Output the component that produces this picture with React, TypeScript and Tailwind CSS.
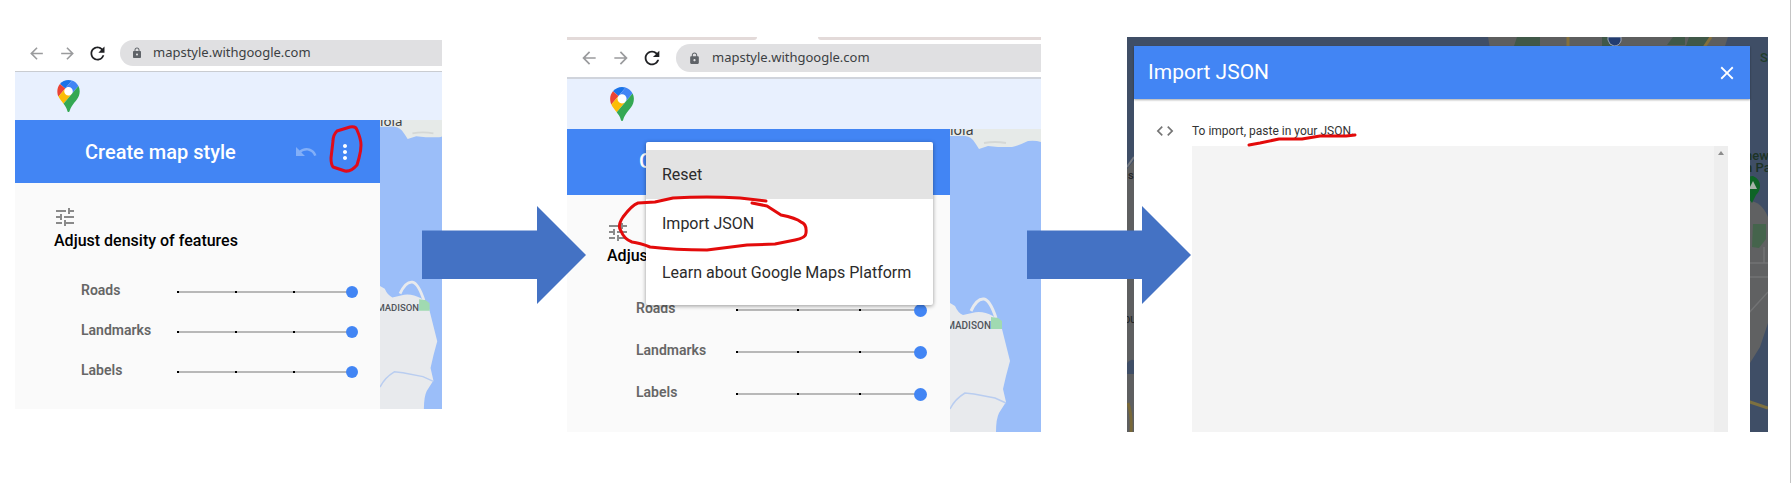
import type { ReactNode } from "react";
import {
  MdArrowBack,
  MdArrowForward,
  MdClose,
  MdCode,
  MdLock,
  MdMoreVert,
  MdRefresh,
  MdTune,
  MdUndo,
} from "react-icons/md";

const small = {
  toolbar: "h-[35px] pl-3 pt-[3px] pb-[5px] border-b border-[#c9ccd1]",
  nav: "size-[19px]",
  gap: "gap-3",
  reload: "size-[21px]",
  bar: "ml-3 h-[26px] pl-[11px] gap-[10px] text-[13px]",
  lock: "size-3",
  banner: "h-12 pt-2 pl-[42px]",
  pin: "h-8 w-[23px]",
  header: "h-[63px] pl-[70px] pr-[23px]",
  title: "text-[20px]",
  icons: "gap-[15px]",
  settings: "pt-[22px] pb-[19px] pl-[38px] pr-[22px]",
  heading: "text-[16px]",
  rows: "mt-[17px] pl-7",
  row: "h-10",
  label: "w-[91px] text-[14px]",
  thumb: "[&::-webkit-slider-thumb]:size-3",
};

const large: typeof small = {
  toolbar: "h-[39px] pl-3 pt-1 pb-[5px] border-b-2 border-[#d0d4dc]",
  nav: "size-5",
  gap: "gap-3",
  reload: "size-[22px]",
  bar: "ml-[13px] h-7 pl-[12px] gap-[11px] text-[13px]",
  lock: "size-[13px]",
  banner: "h-[50px] pt-2 pl-[43px]",
  pin: "h-[34px] w-6",
  header: "h-[66px] pl-[72px] pr-[24px]",
  title: "text-[21px]",
  icons: "gap-4",
  settings: "pt-[25px] pb-[19px] pl-[39px] pr-[23px]",
  heading: "text-[16px]",
  rows: "mt-[19px] pl-[30px]",
  row: "h-[42px]",
  label: "w-[95px] text-[14px]",
  thumb: "[&::-webkit-slider-thumb]:size-[13px]",
};

type Size = typeof small;

function MapsPin({ className }: { className: string }) {
  return (
    <svg viewBox="0 0 92.3 132.3" className={className} aria-hidden="true">
      <circle cx="46.2" cy="46.2" r="20" fill="#fff" />
      <path fill="#1a73e8" d="M60.2 2.2C55.8.8 51 0 46.1 0 32 0 19.3 6.4 10.8 16.5l21.8 18.3L60.2 2.2z" />
      <path fill="#ea4335" d="M10.8 16.5C4.1 24.5 0 34.9 0 46.1c0 8.7 1.7 15.7 4.6 22l28-33.3-21.8-18.3z" />
      <path fill="#4285f4" d="M46.2 28.5c9.8 0 17.7 7.9 17.7 17.7 0 4.3-1.6 8.3-4.2 11.4 0 0 13.9-16.6 27.5-32.7-5.6-10.8-15.3-19-27-22.7L32.6 34.8c3.3-3.8 8.1-6.3 13.6-6.3" />
      <path fill="#fbbc04" d="M46.2 63.8c-9.8 0-17.7-7.9-17.7-17.7 0-4.3 1.5-8.3 4.1-11.3l-28 33.3c4.8 10.6 12.8 19.2 21 29.9l34.1-40.5c-3.3 3.9-8.1 6.3-13.5 6.3" />
      <path fill="#34a853" d="M59.1 109.2c15.4-24.1 33.3-35 33.3-63 0-7.7-1.9-14.9-5.2-21.3L25.6 98c2.6 3.4 5.3 7.3 7.9 11.3 9.4 14.5 6.8 23.1 12.8 23.1s3.4-8.7 12.8-23.2" />
    </svg>
  );
}

function Coast({ viewBox }: { viewBox: string }) {
  return (
    <svg viewBox={viewBox} preserveAspectRatio="xMinYMin slice" className="block h-full w-full bg-[#9bbef9]">
      <path d="M0 0H91V13Q85 11 78 12Q70 16 62 18L48 18L38 17L29 20Q26 15 23 11Q18 6 10 7H0Z" fill="#e6eae8" />
      <path d="M34 14Q45 12 56 14" stroke="#d5d8d6" strokeWidth="2" fill="none" />
      <path d="M0 174L5 177Q8 184 13 186L22 184Q32 181 43 187L51 196L55 212L60 232L56 247L53 260L56 273L49 284Q46 290 46 303H0Z" fill="#e8eaed" />
      <path d="M21 182Q27 169 34 170Q40 171 46 189" stroke="#e8eaed" strokeWidth="3" fill="none" />
      <path d="M41 188L48 189L52 192V200H41Z" fill="#a0dab1" />
      <path d="M0 280Q5 270 15 264L24 265L45 269L56 274" stroke="#b9cdf0" strokeWidth="1.5" fill="none" />
      <text x="0" y="6" className="font-['Noto_Sans'] text-[14px]" fill="#3c4043">lola</text>
      <text x="41" y="200" textAnchor="end" className="font-[Roboto] text-[10px] font-medium" fill="#50555b">MADISON</text>
    </svg>
  );
}

function Slider({ id, label, size }: { id: string; label: string; size: Size }) {
  return (
    <div className={`flex items-center ${size.row}`}>
      <label htmlFor={id} className={`shrink-0 font-semibold text-[#666] ${size.label}`}>
        {label}
      </label>
      <div className="mt-1 grid min-w-0 flex-1 items-center">
        <div className="col-start-1 row-start-1 mx-[5px] flex h-[2px] items-center justify-between bg-[#b8b8b8]">
          <i className="size-[2px] bg-black" />
          <i className="size-[2px] bg-black" />
          <i className="size-[2px] bg-black" />
          <i className="size-[2px] bg-black" />
        </div>
        <input
          id={id}
          type="range"
          min={0}
          max={3}
          defaultValue={3}
          className={`col-start-1 row-start-1 h-3 w-full appearance-none bg-transparent [&::-webkit-slider-thumb]:appearance-none [&::-webkit-slider-thumb]:rounded-full [&::-webkit-slider-thumb]:bg-[#4285f4] ${size.thumb}`}
        />
      </div>
    </div>
  );
}

function StyleEditor({
  name,
  size,
  columns,
  viewBox,
  mark,
  overlay,
}: {
  name: string;
  size: Size;
  columns: string;
  viewBox: string;
  mark?: ReactNode;
  overlay?: ReactNode;
}) {
  return (
    <>
      <div className={`flex items-center bg-white ${size.toolbar}`}>
        <div className={`flex items-center text-[#9a9b9d] ${size.gap}`}>
          <button type="button" aria-label="Back"><MdArrowBack className={size.nav} /></button>
          <button type="button" aria-label="Forward"><MdArrowForward className={size.nav} /></button>
          <button type="button" aria-label="Reload" className="-ml-1 pl-[2px] text-[#202124]"><MdRefresh className={size.reload} /></button>
        </div>
        <div className={`flex flex-1 items-center rounded-l-full bg-[#e0e0e2] font-['Noto_Sans'] text-[#3c4043] ${size.bar}`}>
          <MdLock className={`text-[#5f6368] ${size.lock}`} />
          <span>mapstyle.withgoogle.com</span>
        </div>
      </div>
      <div className={`bg-[#e8f0fe] ${size.banner}`}>
        <MapsPin className={size.pin} />
      </div>
      <div className={`relative grid ${columns}`}>
        <section className="bg-[#fafafa]">
          <header className={`flex items-center justify-between bg-[#4285f4] text-white ${size.header}`}>
            <h2 className={`font-medium ${size.title}`}>Create map style</h2>
            <div className={`flex items-center ${size.icons}`}>
              <button type="button" aria-label="Undo" className="text-[#82aff8]"><MdUndo className="size-6" /></button>
              <button type="button" aria-label="More options" className="relative">
                <MdMoreVert className="size-6" />
                {mark}
              </button>
            </div>
          </header>
          <div className={size.settings}>
            <MdTune className="size-6 text-[#8a8a8a]" />
            <h3 className={`pl-px leading-6 font-medium text-black ${size.heading}`}>Adjust density of features</h3>
            <div className={size.rows}>
              <Slider id={`${name}-roads`} label="Roads" size={size} />
              <Slider id={`${name}-landmarks`} label="Landmarks" size={size} />
              <Slider id={`${name}-labels`} label="Labels" size={size} />
            </div>
          </div>
        </section>
        <div className="relative overflow-hidden">
          <div className="absolute inset-0"><Coast viewBox={viewBox} /></div>
        </div>
        {overlay}
      </div>
    </>
  );
}

function OptionsMenu() {
  return (
    <div className="absolute top-[13px] left-[79px] w-[287px] rounded-[2px] bg-white py-2 text-[16px] text-[#2b2b2b] shadow-[0_1px_4px_rgba(0,0,0,0.4)]">
      <button type="button" className="block h-[49px] w-full bg-[#e3e3e3] px-4 text-left">Reset</button>
      <button type="button" className="block h-[49px] w-full px-4 text-left">Import JSON</button>
      <button type="button" className="block h-[49px] w-full px-4 text-left whitespace-nowrap">Learn about Google Maps Platform</button>
      <svg viewBox="0 0 195 60" className="pointer-events-none absolute top-[51px] left-[-31px] h-[60px] w-[195px]" aria-hidden="true">
        <path
          d="M151 8L125 5Q92 3 58 5L40 9L23 10Q17 12 8 24Q2 33 6 38Q9 46 17 49Q25 50 35 54Q60 57 92 57L132 52L160 51L180 47Q191 45 191 40Q192 31 186 29Q181 25 166 22L152 13L137 10"
          fill="none"
          stroke="#e30b0b"
          strokeWidth="3"
          strokeLinecap="round"
          strokeLinejoin="round"
        />
      </svg>
    </div>
  );
}

function DimmedMap() {
  return (
    <svg viewBox="0 0 641 395" preserveAspectRatio="none" className="absolute inset-0 h-full w-full" aria-hidden="true">
      <rect width="641" height="395" fill="#3f4e66" />
      <path d="M361 0H601L597 12H363Z" fill="#5d5e5e" />
      <path d="M390 0H413V12H386ZM475 0H489V12H475ZM546 0H558V8H540ZM562 0H584L578 12H558Z" fill="#405848" />
      <path d="M441 0V12M584 0L576 12" stroke="#84703d" strokeWidth="3" />
      <path d="M481 0H494V4Q492 9 487 9Q482 8 481 3Z" fill="#233c70" stroke="#9aa5b8" />
      <path d="M0 132L10 120V395H0Z" fill="#5e5f60" />
      <path d="M0 130L7 120" stroke="#777b82" strokeWidth="2" />
      <path d="M0 326Q6 320 8 325V337H0Z" fill="#3f4e66" />
      <path d="M1 366Q5 378 4 395" stroke="#786839" strokeWidth="3" fill="none" />
      <path d="M620 164Q634 163 641 180V286L633 310L623 326H620Z" fill="#606162" />
      <path d="M626 187H639V202L632 211L625 210Z" fill="#45644c" />
      <path d="M620 226H641M620 240H641M637 210V226M620 278L641 255" stroke="#727374" strokeWidth="1.5" />
      <path d="M620 364L641 371" stroke="#7d7040" strokeWidth="3" />
      <path d="M633 149Q633 154 629 158L625 166L619 157Q616 139 626 139Q633 142 633 149Z" fill="#0e6426" />
      <path d="M622 152L626 144L630 152Z" fill="#a5b3a8" />
      <g className="font-[Roboto] text-[13px] font-medium">
        <text x="633" y="25" fill="#213d2b">S</text>
        <text x="618" y="123" fill="#1c3325">hew</text>
        <text x="618" y="135" fill="#1c3325">n Pa</text>
        <text x="1" y="142" fill="#242628" className="text-[11px]">s</text>
        <text x="-3" y="286" fill="#242628" className="text-[9px]">OU</text>
      </g>
    </svg>
  );
}

function ImportDialog() {
  return (
    <div className="relative h-[395px] pt-[9px] pr-[18px] pl-[7px]">
      <DimmedMap />
      <section className="relative flex h-full flex-col bg-white">
        <header className="flex h-[53px] shrink-0 items-center justify-between bg-[#4285f4] pr-3 pl-[14px] text-white shadow-[0_1px_2px_rgba(0,0,0,0.35)]">
          <h2 className="text-[21px]">Import JSON</h2>
          <button type="button" aria-label="Close"><MdClose className="size-[22px]" /></button>
        </header>
        <div className="grid flex-1 grid-cols-[auto_1fr] grid-rows-[auto_1fr] gap-x-[17px] gap-y-[5px] pt-[22px] pr-[22px] pl-[21px]">
          <MdCode className="size-5 text-[#757575]" />
          <label htmlFor="json" className="relative justify-self-start text-[12px] leading-5 text-[#333]">
            To import, paste in your JSON.
            <svg viewBox="0 0 116 18" className="pointer-events-none absolute top-[9px] left-[53px] h-[18px] w-[116px]" aria-hidden="true">
              <path d="M4 15L15 13L34 9L57 9L75 6L101 6L110 5" fill="none" stroke="#e30b0b" strokeWidth="3" strokeLinecap="round" strokeLinejoin="round" />
            </svg>
          </label>
          <div className="col-start-2 flex bg-[#f4f4f4]">
            <textarea id="json" className="min-w-0 flex-1 resize-none bg-transparent p-2 text-[13px] outline-none" />
            <div className="flex w-[14px] justify-center bg-[#eee] pt-[5px]">
              <svg viewBox="0 0 6 4" className="h-1 w-[6px]" aria-hidden="true">
                <path d="M0 4L3 0L6 4Z" fill="#8c8c8c" />
              </svg>
            </div>
          </div>
        </div>
      </section>
    </div>
  );
}

function Arrow({ className }: { className: string }) {
  return (
    <div className="relative z-10">
      <svg viewBox="0 0 164 98" className={`absolute top-[169px] h-[98px] w-[164px] ${className}`} aria-hidden="true">
        <path d="M0 24.5H115V0L164 49L115 98V73H0Z" fill="#4472c4" />
      </svg>
    </div>
  );
}

export default function App() {
  return (
    <main className="min-h-screen border-r border-[#c4c4c4] bg-white pt-[37px] pr-[22px] pl-[15px] font-[Roboto,sans-serif]">
      <div className="grid grid-cols-[427fr_125fr_474fr_86fr_641fr] items-start">
        <article>
          <StyleEditor
            name="first"
            size={small}
            columns="grid-cols-[365fr_62fr]"
            viewBox="0 0 65 303"
            mark={
              <svg viewBox="0 0 36 50" className="pointer-events-none absolute top-[-16px] left-[-6px] h-[50px] w-9" aria-hidden="true">
                <path
                  d="M10 7L23 3Q29 2 30 6Q34 15 34 21Q34 27 32 34L30 41Q24 48 18 47L6 43Q4 40 4 34L6 17Q6 11 10 7Z"
                  fill="none"
                  stroke="#e00b1c"
                  strokeWidth="3"
                  strokeLinejoin="round"
                />
              </svg>
            }
          />
        </article>
        <Arrow className="left-[-20px]" />
        <article>
          <div className="flex h-[3px] justify-between" aria-hidden="true">
            <div className="w-2/5 rounded-br bg-[#e3dad9]" />
            <div className="w-[47%] rounded-bl bg-[#e3dad9]" />
          </div>
          <StyleEditor
            name="second"
            size={large}
            columns="grid-cols-[383fr_91fr]"
            viewBox="0 0 91 303"
            overlay={<OptionsMenu />}
          />
        </article>
        <Arrow className="left-[-14px]" />
        <article>
          <ImportDialog />
        </article>
      </div>
    </main>
  );
}
